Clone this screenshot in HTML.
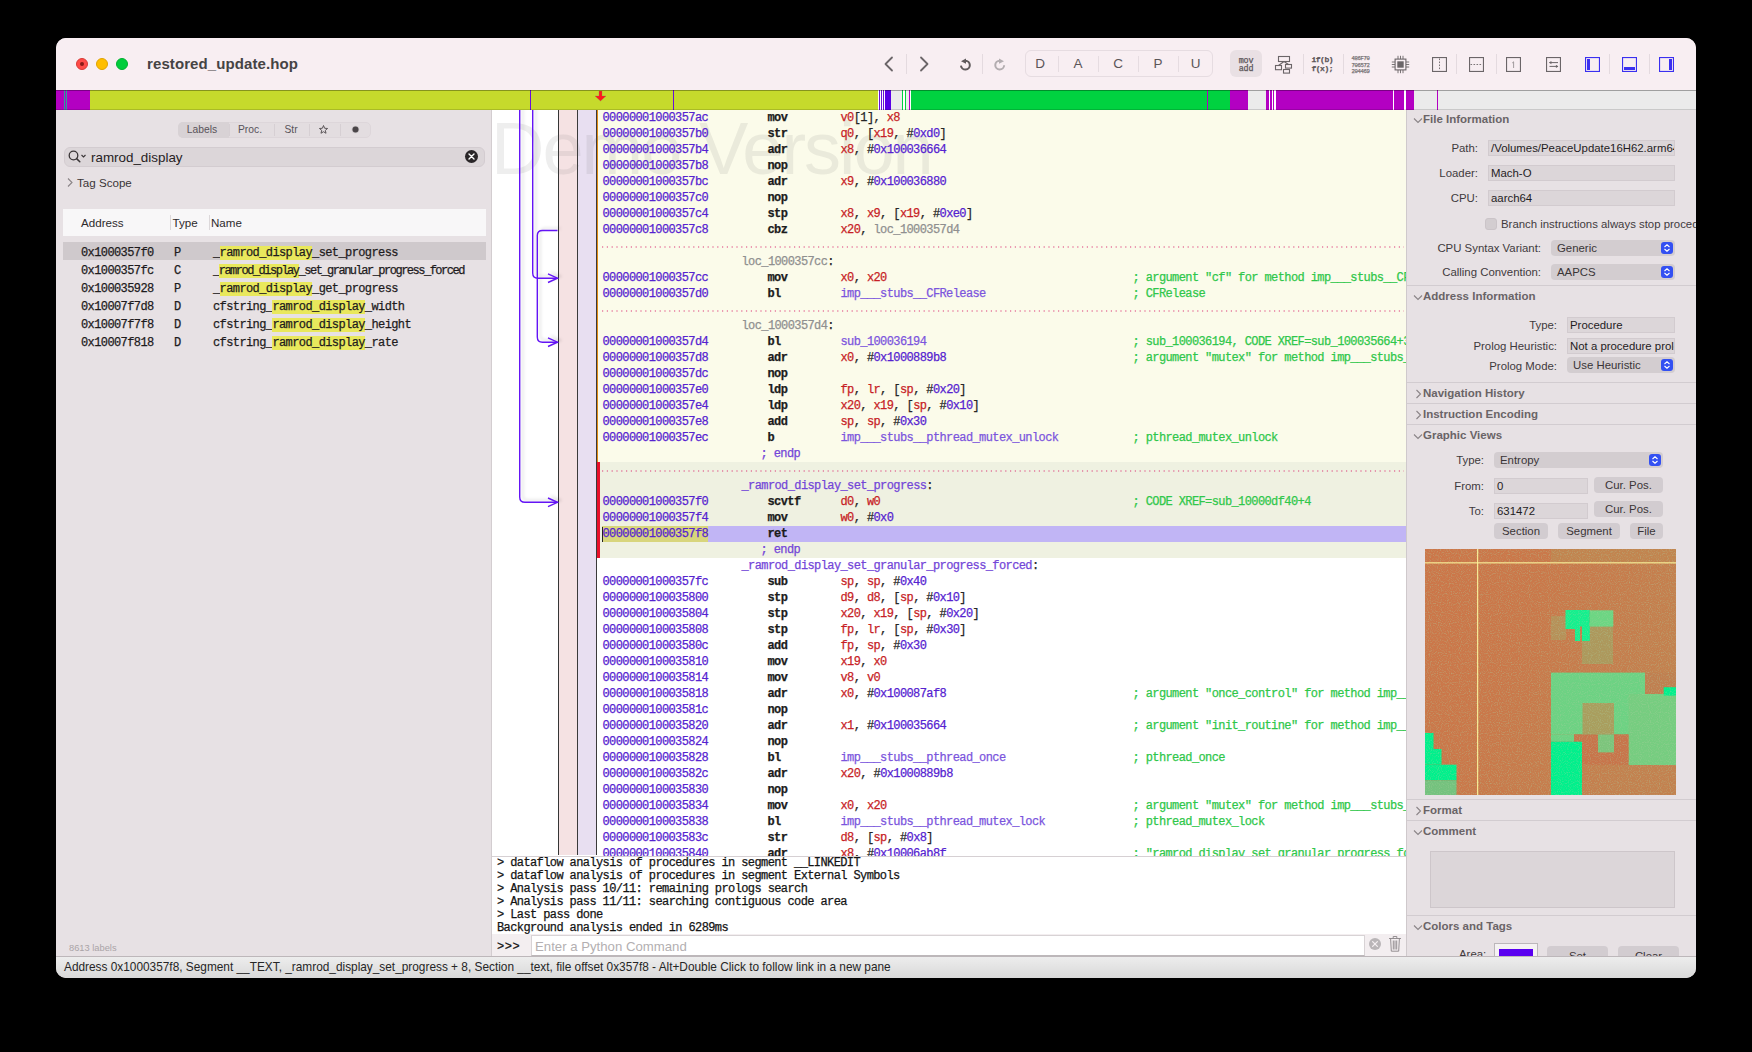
<!DOCTYPE html><html><head><meta charset="utf-8"><style>
*{box-sizing:border-box;margin:0;padding:0}
html,body{width:1752px;height:1052px;overflow:hidden;background:#000}
body{position:relative;font-family:"Liberation Sans",sans-serif}
.a{position:absolute}
.win{position:absolute;left:0;top:0;width:1752px;height:1052px;clip-path:inset(38px 56px 74px 56px round 10px)}
.m{font-family:"Liberation Mono",monospace;font-size:12px;letter-spacing:-0.6px;white-space:pre;-webkit-text-stroke:0.25px currentColor}
.s{font-family:"Liberation Sans",sans-serif;white-space:pre}
.row{position:absolute;left:597px;width:809px;height:16px}
.t{position:absolute;top:0;line-height:16px;height:16px}
.ad{color:#5522d0}
.mn{color:#1c1c1c;font-weight:bold}
.rg{color:#c71e26}
.nm{color:#5522d0}
.pn{color:#262626}
.gl{color:#8f8f8f}
.fn{color:#7b55dd}
.cm{color:#2fc74a}
.lb{color:#8f8f8f}
.pl{color:#7346d8}
.sep{position:absolute;height:1px;border-top:1px dotted #e05a8e}
</style></head><body>
<div class="win">
<div class="a" style="left:56px;top:38px;width:1640px;height:940px;background:#e7e1e4"></div>
<div class="a" style="left:56px;top:38px;width:1640px;height:52px;background:#f8eef2"></div>
<div class="a" style="left:76px;top:58px;width:12px;height:12px;border-radius:6px;background:#ff4b47;border:0.5px solid #d83a36"></div>
<div class="a" style="left:96px;top:58px;width:12px;height:12px;border-radius:6px;background:#ffbe00;border:0.5px solid #e0a300"></div>
<div class="a" style="left:116px;top:58px;width:12px;height:12px;border-radius:6px;background:#00cd3c;border:0.5px solid #00b030"></div>
<div class="a" style="left:80px;top:62px;width:4px;height:4px;border-radius:2px;background:#8a1a16"></div>
<div class="a s" style="left:147px;top:54px;font-size:15px;font-weight:bold;color:#454344;line-height:20px;letter-spacing:0.1px">restored_update.hop</div>
<svg class="a" style="left:882px;top:56px" width="14" height="16" viewBox="0 0 14 16" ><path d="M10 1.5 L3.5 8 L10 14.5" fill="none" stroke="#6b6568" stroke-width="1.8" stroke-linecap="round" stroke-linejoin="round"/></svg>
<div class="a" style="left:906px;top:54px;width:1px;height:20px;background:#e4dadf"></div>
<svg class="a" style="left:917px;top:56px" width="14" height="16" viewBox="0 0 14 16" ><path d="M4 1.5 L10.5 8 L4 14.5" fill="none" stroke="#6b6568" stroke-width="1.8" stroke-linecap="round" stroke-linejoin="round"/></svg>
<svg class="a" style="left:955px;top:55px" width="20" height="20" viewBox="0 0 20 20" ><path d="M10.4 5.65 A4.45 4.45 0 1 1 5.95 10.6" fill="none" stroke="#5f5a5c" stroke-width="2"/><path d="M6 6.2 L11 3.6 L11 8.8 Z" fill="#5f5a5c"/></svg>
<div class="a" style="left:982px;top:54px;width:1px;height:20px;background:#e4dadf"></div>
<svg class="a" style="left:990px;top:55px" width="20" height="20" viewBox="0 0 20 20" ><path d="M9.7 5.65 A4.45 4.45 0 1 0 14.15 10.3" fill="none" stroke="#b3adb0" stroke-width="2"/><path d="M14 6.2 L9 3.6 L9 8.8 Z" fill="#b3adb0"/></svg>
<div class="a" style="left:1025px;top:50px;width:188px;height:27px;border:1px solid #e6dce1;border-radius:6px"></div>
<div class="a s" style="left:1030px;top:55px;width:20px;text-align:center;font-size:13.5px;line-height:18px;color:#5b5558">D</div>
<div class="a s" style="left:1068px;top:55px;width:20px;text-align:center;font-size:13.5px;line-height:18px;color:#5b5558">A</div>
<div class="a s" style="left:1108px;top:55px;width:20px;text-align:center;font-size:13.5px;line-height:18px;color:#5b5558">C</div>
<div class="a s" style="left:1148px;top:55px;width:20px;text-align:center;font-size:13.5px;line-height:18px;color:#5b5558">P</div>
<div class="a s" style="left:1185.5px;top:55px;width:20px;text-align:center;font-size:13.5px;line-height:18px;color:#5b5558">U</div>
<div class="a" style="left:1058px;top:56px;width:1px;height:16px;background:#e6dce1"></div>
<div class="a" style="left:1098px;top:56px;width:1px;height:16px;background:#e6dce1"></div>
<div class="a" style="left:1138px;top:56px;width:1px;height:16px;background:#e6dce1"></div>
<div class="a" style="left:1178px;top:56px;width:1px;height:16px;background:#e6dce1"></div>
<div class="a" style="left:1230px;top:50px;width:32px;height:27px;border-radius:6px;background:#e9e0e4"></div>
<div class="a m" style="left:1230px;top:58.3px;width:32px;text-align:center;font-size:8.4px;letter-spacing:-0.2px;line-height:7.8px;color:#5b5558">mov
add</div>
<svg class="a" style="left:1274px;top:55px" width="19" height="19" viewBox="0 0 19 19" ><g fill="none" stroke="#6b6568" stroke-width="1.1"><rect x="4.5" y="1.5" width="11" height="5"/><rect x="1.5" y="10.5" width="6" height="4.2"/><rect x="11.5" y="9.5" width="6" height="3.6"/><rect x="9.5" y="14.5" width="6" height="3.6"/><path d="M10 6.5 L4.5 10.5 M10 6.5 L14.5 9.5"/></g></svg>
<div class="a" style="left:1303px;top:54px;width:1px;height:20px;background:#e4dadf"></div>
<div class="a m" style="left:1308px;top:56.4px;width:25px;text-align:right;font-size:8px;font-weight:bold;letter-spacing:-0.5px;line-height:8.2px;color:#5b5558">if(b)
f(x);</div>
<div class="a" style="left:1343px;top:54px;width:1px;height:20px;background:#e4dadf"></div>
<div class="a m" style="left:1350px;top:56px;width:21px;text-align:center;font-size:5.6px;letter-spacing:-0.35px;line-height:6.5px;color:#7a7477">486F70
706572
204469</div>
<svg class="a" style="left:1391px;top:55px" width="19" height="19" viewBox="0 0 19 19" ><rect x="4.1" y="4.1" width="10.8" height="10.8" fill="none" stroke="#6b6568" stroke-width="1.1"/><rect x="6.3" y="6.3" width="6.4" height="6.4" fill="#6b6568"/><g stroke="#6b6568" stroke-width="0.9"><path d="M7 0.8V4 M9.5 0.8V4 M12 0.8V4 M7 15V18.2 M9.5 15V18.2 M12 15V18.2 M0.8 7H4 M0.8 9.5H4 M0.8 12H4 M15 7H18.2 M15 9.5H18.2 M15 12H18.2"/></g></svg>
<svg class="a" style="left:1432px;top:57px" width="15" height="15" viewBox="0 0 15 15" ><rect x="0.55" y="0.55" width="13.9" height="13.9" fill="none" stroke="#6b6568" stroke-width="1.1"/><path d="M7.5 1.5V13.5" stroke="#6b6568" stroke-width="0.9" stroke-dasharray="1.6 1.4"/></svg>
<div class="a" style="left:1456px;top:54px;width:1px;height:20px;background:#e4dadf"></div>
<svg class="a" style="left:1469px;top:57px" width="15" height="15" viewBox="0 0 15 15" ><rect x="0.55" y="0.55" width="13.9" height="13.9" fill="none" stroke="#6b6568" stroke-width="1.1"/><path d="M1.5 7.5H13.5" stroke="#6b6568" stroke-width="0.9" stroke-dasharray="1.6 1.4"/></svg>
<div class="a" style="left:1496px;top:54px;width:1px;height:20px;background:#e4dadf"></div>
<svg class="a" style="left:1506px;top:57px" width="15" height="15" viewBox="0 0 15 15" ><rect x="0.55" y="0.55" width="13.9" height="13.9" fill="none" stroke="#6b6568" stroke-width="1.1"/><path d="M6.2 6 L7.6 4.8 V11" fill="none" stroke="#8b8588" stroke-width="0.8"/></svg>
<svg class="a" style="left:1546px;top:57px" width="15" height="15" viewBox="0 0 15 15" ><rect x="0.55" y="0.55" width="13.9" height="13.9" fill="none" stroke="#6b6568" stroke-width="1.1"/><g fill="none" stroke="#6b6568" stroke-width="1"><path d="M3.5 5.6H12 M3.5 9.4H12"/></g><path d="M3 5.6 L5.4 4 V7.2Z M12.3 9.4 L9.9 7.8 V11Z" fill="#6b6568"/></svg>
<svg class="a" style="left:1585px;top:57px" width="15" height="15" viewBox="0 0 15 15" ><rect x="0.55" y="0.55" width="13.9" height="13.9" fill="none" stroke="#3a2ff0" stroke-width="1.1"/><rect x="2" y="2" width="3" height="11" fill="#3a2ff0"/></svg>
<div class="a" style="left:1609px;top:54px;width:1px;height:20px;background:#e4dadf"></div>
<svg class="a" style="left:1622px;top:57px" width="15" height="15" viewBox="0 0 15 15" ><rect x="0.55" y="0.55" width="13.9" height="13.9" fill="none" stroke="#3a2ff0" stroke-width="1.1"/><rect x="2" y="10" width="11" height="3" fill="#3a2ff0"/></svg>
<div class="a" style="left:1649px;top:54px;width:1px;height:20px;background:#e4dadf"></div>
<svg class="a" style="left:1659px;top:57px" width="15" height="15" viewBox="0 0 15 15" ><rect x="0.55" y="0.55" width="13.9" height="13.9" fill="none" stroke="#3a2ff0" stroke-width="1.1"/><rect x="10" y="2" width="3" height="11" fill="#3a2ff0"/></svg>
<div class="a" style="left:56px;top:90px;width:34px;height:20px;background:#b300c2"></div>
<div class="a" style="left:90px;top:90px;width:788px;height:20px;background:#c6da2c"></div>
<div class="a" style="left:878px;top:90px;width:7px;height:20px;background:#ffffff"></div>
<div class="a" style="left:885px;top:90px;width:6px;height:20px;background:#5a00e6"></div>
<div class="a" style="left:891px;top:90px;width:11px;height:20px;background:#ebebeb"></div>
<div class="a" style="left:902px;top:90px;width:4px;height:20px;background:#ffffff"></div>
<div class="a" style="left:906px;top:90px;width:3px;height:20px;background:#ebebeb"></div>
<div class="a" style="left:909px;top:90px;width:2px;height:20px;background:#ffffff"></div>
<div class="a" style="left:911px;top:90px;width:319px;height:20px;background:#00d240"></div>
<div class="a" style="left:1230px;top:90px;width:18px;height:20px;background:#b300c2"></div>
<div class="a" style="left:1248px;top:90px;width:18px;height:20px;background:#ebebeb"></div>
<div class="a" style="left:1266px;top:90px;width:3px;height:20px;background:#b300c2"></div>
<div class="a" style="left:1269px;top:90px;width:1px;height:20px;background:#ffffff"></div>
<div class="a" style="left:1270px;top:90px;width:2px;height:20px;background:#b300c2"></div>
<div class="a" style="left:1272px;top:90px;width:1px;height:20px;background:#ffffff"></div>
<div class="a" style="left:1273px;top:90px;width:1px;height:20px;background:#b300c2"></div>
<div class="a" style="left:1274px;top:90px;width:2px;height:20px;background:#ffffff"></div>
<div class="a" style="left:1276px;top:90px;width:117px;height:20px;background:#b300c2"></div>
<div class="a" style="left:1393px;top:90px;width:1px;height:20px;background:#ffffff"></div>
<div class="a" style="left:1394px;top:90px;width:10px;height:20px;background:#b300c2"></div>
<div class="a" style="left:1404px;top:90px;width:2px;height:20px;background:#ffffff"></div>
<div class="a" style="left:1406px;top:90px;width:8px;height:20px;background:#b300c2"></div>
<div class="a" style="left:1414px;top:90px;width:282px;height:20px;background:#ebebeb"></div>
<div class="a" style="left:64px;top:90px;width:1px;height:20px;background:#2aa0a0"></div>
<div class="a" style="left:66px;top:90px;width:1px;height:20px;background:#2aa0a0"></div>
<div class="a" style="left:530px;top:90px;width:1px;height:20px;background:#6a10d8"></div>
<div class="a" style="left:673px;top:90px;width:1px;height:20px;background:#6a10d8"></div>
<div class="a" style="left:879px;top:90px;width:1px;height:20px;background:#6a10d8"></div>
<div class="a" style="left:881px;top:90px;width:1px;height:20px;background:#6a10d8"></div>
<div class="a" style="left:883px;top:90px;width:1px;height:20px;background:#6a10d8"></div>
<div class="a" style="left:902px;top:90px;width:1px;height:20px;background:#00d240"></div>
<div class="a" style="left:905px;top:90px;width:1px;height:20px;background:#00d240"></div>
<div class="a" style="left:909px;top:90px;width:1px;height:20px;background:#b300c2"></div>
<div class="a" style="left:1207px;top:90px;width:1px;height:20px;background:#b300c2"></div>
<div class="a" style="left:1437px;top:90px;width:1px;height:20px;background:#b300c2"></div>
<div class="a" style="left:56px;top:90px;width:1640px;height:1px;background:rgba(0,0,0,0.32)"></div>
<div class="a" style="left:56px;top:109px;width:1640px;height:1px;background:rgba(0,0,0,0.14)"></div>
<svg class="a" style="left:594px;top:91px" width="13" height="11" viewBox="0 0 13 11" ><path d="M5 0H8V5H12L6.5 10L1 5H5Z" fill="#ff1a1a" stroke="rgba(120,120,120,0.5)" stroke-width="0.5"/></svg>
<div class="a" style="left:56px;top:110px;width:435px;height:846px;background:#e7e1e4"></div>
<div class="a" style="left:491px;top:110px;width:1px;height:745px;background:#d3cdd0"></div>
<div class="a" style="left:178px;top:122px;width:193px;height:16px;border-radius:5px;background:#e3dde0;border:0.5px solid #ddd6da"></div>
<div class="a" style="left:178px;top:122px;width:50.5px;height:16px;border-radius:5px 0 0 5px;background:#d8d2d5"></div>
<div class="a" style="left:228.5px;top:124px;width:1px;height:12px;background:#d6cfd3"></div>
<div class="a" style="left:273.5px;top:124px;width:1px;height:12px;background:#d6cfd3"></div>
<div class="a" style="left:308.5px;top:124px;width:1px;height:12px;background:#d6cfd3"></div>
<div class="a" style="left:340px;top:124px;width:1px;height:12px;background:#d6cfd3"></div>
<div class="a s" style="left:172px;top:123px;width:60px;text-align:center;font-size:10.3px;line-height:14px;color:#58535a">Labels</div>
<div class="a s" style="left:220px;top:123px;width:60px;text-align:center;font-size:10.3px;line-height:14px;color:#58535a">Proc.</div>
<div class="a s" style="left:261px;top:123px;width:60px;text-align:center;font-size:10.3px;line-height:14px;color:#58535a">Str</div>
<svg class="a" style="left:317px;top:123px" width="13" height="13" viewBox="0 0 13 13" ><path d="M6.50 2.50 L7.62 5.26 L10.59 5.47 L8.31 7.39 L9.03 10.28 L6.50 8.70 L3.97 10.28 L4.69 7.39 L2.41 5.47 L5.38 5.26Z" fill="none" stroke="#5b5558" stroke-width="1"/></svg>
<svg class="a" style="left:349px;top:123px" width="13" height="13" viewBox="0 0 13 13" ><circle cx="6.5" cy="6.5" r="3.8" fill="#c9c3c6"/><circle cx="6.5" cy="6.5" r="3" fill="#4a4548"/></svg>
<div class="a" style="left:64px;top:147px;width:421px;height:20px;border-radius:6px;background:#dcd6d9;border:0.5px solid #d3ccd0"></div>
<svg class="a" style="left:68px;top:150px" width="19" height="14" viewBox="0 0 19 14" ><circle cx="5.5" cy="5.5" r="4.3" fill="none" stroke="#3a3537" stroke-width="1.3"/><path d="M8.6 8.6 L11.8 11.8" stroke="#3a3537" stroke-width="1.5" stroke-linecap="round"/><path d="M13.5 5 L15.5 7 L17.5 5" fill="none" stroke="#3a3537" stroke-width="1.1"/></svg>
<div class="a s" style="left:91px;top:149px;font-size:13.4px;line-height:18px;color:#262224">ramrod_display</div>
<svg class="a" style="left:464px;top:149px" width="15" height="15" viewBox="0 0 15 15" ><circle cx="7.5" cy="7.5" r="6.5" fill="#2a2628"/><path d="M5 5L10 10M10 5L5 10" stroke="#fff" stroke-width="1.4" stroke-linecap="round"/></svg>
<svg class="a" style="left:66px;top:177px" width="8" height="11" viewBox="0 0 8 11" ><path d="M2 1.5 L6 5.5 L2 9.5" fill="none" stroke="#8a8487" stroke-width="1.1"/></svg>
<div class="a s" style="left:77px;top:176px;font-size:11.6px;line-height:14px;color:#3a3537">Tag Scope</div>
<div class="a" style="left:63px;top:209px;width:423px;height:27px;background:#f8f7f8"></div>
<div class="a" style="left:170px;top:215px;width:1px;height:15px;background:#dcd8da"></div>
<div class="a" style="left:209px;top:215px;width:1px;height:15px;background:#dcd8da"></div>
<div class="a s" style="left:81px;top:216px;font-size:11.6px;line-height:14px;color:#2e2a2c">Address</div>
<div class="a s" style="left:172.5px;top:216px;font-size:11.6px;line-height:14px;color:#2e2a2c">Type</div>
<div class="a s" style="left:211px;top:216px;font-size:11.6px;line-height:14px;color:#2e2a2c">Name</div>
<div class="a" style="left:63px;top:242px;width:423px;height:18px;background:#cfc9cc"></div>
<div class="a m" style="left:81px;top:245px;line-height:16px;color:#1e1b1d">0x1000357f0</div>
<div class="a m" style="left:174px;top:245px;line-height:16px;color:#1e1b1d">P</div>
<div class="a m" style="left:213px;top:245px;line-height:16px;color:#1e1b1d">_<span style="background:#e9e85c">ramrod_display</span>_set_progress</div>
<div class="a m" style="left:81px;top:263px;line-height:16px;color:#1e1b1d">0x1000357fc</div>
<div class="a m" style="left:174px;top:263px;line-height:16px;color:#1e1b1d">C</div>
<div class="a m" style="left:213px;top:263px;line-height:16px;color:#1e1b1d;letter-spacing:-1.5px">_<span style="background:#e9e85c">ramrod_display</span>_set_granular_progress_forced</div>
<div class="a m" style="left:81px;top:281px;line-height:16px;color:#1e1b1d">0x100035928</div>
<div class="a m" style="left:174px;top:281px;line-height:16px;color:#1e1b1d">P</div>
<div class="a m" style="left:213px;top:281px;line-height:16px;color:#1e1b1d">_<span style="background:#e9e85c">ramrod_display</span>_get_progress</div>
<div class="a m" style="left:81px;top:299px;line-height:16px;color:#1e1b1d">0x10007f7d8</div>
<div class="a m" style="left:174px;top:299px;line-height:16px;color:#1e1b1d">D</div>
<div class="a m" style="left:213px;top:299px;line-height:16px;color:#1e1b1d">cfstring_<span style="background:#e9e85c">ramrod_display</span>_width</div>
<div class="a m" style="left:81px;top:317px;line-height:16px;color:#1e1b1d">0x10007f7f8</div>
<div class="a m" style="left:174px;top:317px;line-height:16px;color:#1e1b1d">D</div>
<div class="a m" style="left:213px;top:317px;line-height:16px;color:#1e1b1d">cfstring_<span style="background:#e9e85c">ramrod_display</span>_height</div>
<div class="a m" style="left:81px;top:335px;line-height:16px;color:#1e1b1d">0x10007f818</div>
<div class="a m" style="left:174px;top:335px;line-height:16px;color:#1e1b1d">D</div>
<div class="a m" style="left:213px;top:335px;line-height:16px;color:#1e1b1d">cfstring_<span style="background:#e9e85c">ramrod_display</span>_rate</div>
<div class="a s" style="left:69px;top:943px;font-size:9.3px;line-height:11px;color:#aaa4a7">8613 labels</div>
<div class="a" style="left:492px;top:110px;width:914px;height:746px;background:#ffffff;overflow:hidden">
<div class="a" style="left:105px;top:0px;width:809px;height:352px;background:#fbfbea"></div>
<div class="a" style="left:105px;top:352px;width:809px;height:96px;background:#eff1e1"></div>
<div class="a" style="left:111px;top:416px;width:806px;height:16px;background:#c1b5f5"></div>
<div class="a" style="left:110px;top:416px;width:106px;height:16px;background:#d8d57c"></div>
<div class="a" style="left:67px;top:0px;width:18px;height:745px;background:#f5e2e3"></div>
<div class="a" style="left:86px;top:0px;width:18px;height:745px;background:#e8dff1"></div>
<div class="a" style="left:66px;top:0px;width:1.4px;height:745px;background:#353535"></div>
<div class="a" style="left:85px;top:0px;width:1px;height:745px;background:#3a3a3a"></div>
<div class="a" style="left:104px;top:0px;width:1px;height:745px;background:#3a3a3a"></div>
<div class="a" style="left:105px;top:0px;width:1px;height:352px;background:#e08a10"></div>
<div class="a" style="left:105px;top:352px;width:3px;height:96px;background:#e8102a"></div>
<div class="a s" style="left:-1px;top:-3px;font-size:74px;line-height:84px;color:rgba(90,90,90,0.105);letter-spacing:-2px">Demo Version</div>
<svg class="a" style="left:0;top:0;filter:drop-shadow(3px -2px 1.5px rgba(0,0,0,0.13))" width="70" height="745" viewBox="492 110 70 745"><g fill="none" stroke="#6414f5" stroke-width="1.4"><path d="M519.7 100 V497 Q519.7 502.3 525 502.3 H557.5"/><path d="M532.7 100 V273 Q532.7 278.2 538 278.2 H557.5"/><path d="M557.5 230.5 H542.5 Q537.3 230.5 537.3 235.5 V337 Q537.3 342.2 542.5 342.2 H557.5"/><path d="M548 273.9 L557.5 278.2 L548 282.5"/><path d="M548 337.9 L557.5 342.2 L548 346.5"/><path d="M548 498 L557.5 502.3 L548 506.6"/></g></svg>
<svg class="a" style="left:109px;top:136px" width="805" height="2"><line x1="1" y1="1" x2="803" y2="1" stroke="#dc3a78" stroke-width="1.15" stroke-dasharray="1.2 3.6"/></svg>
<svg class="a" style="left:109px;top:200px" width="805" height="2"><line x1="1" y1="1" x2="803" y2="1" stroke="#dc3a78" stroke-width="1.15" stroke-dasharray="1.2 3.6"/></svg>
<svg class="a" style="left:109px;top:360px" width="805" height="2"><line x1="1" y1="1" x2="803" y2="1" stroke="#dc3a78" stroke-width="1.15" stroke-dasharray="1.2 3.6"/></svg>
<div class="t m ad" style="left:110.5px;top:0px">00000001000357ac</div>
<div class="t m mn" style="left:275.5px;top:0px">mov</div>
<div class="t m " style="left:348.5px;top:0px"><span class="rg">v0</span><span class="pn">[1]</span><span class="pn">, </span><span class="rg">x8</span></div>
<div class="t m ad" style="left:110.5px;top:16px">00000001000357b0</div>
<div class="t m mn" style="left:275.5px;top:16px">str</div>
<div class="t m " style="left:348.5px;top:16px"><span class="rg">q0</span><span class="pn">, [</span><span class="rg">x19</span><span class="pn">, </span><span class="pn">#</span><span class="nm">0xd0</span><span class="pn">]</span></div>
<div class="t m ad" style="left:110.5px;top:32px">00000001000357b4</div>
<div class="t m mn" style="left:275.5px;top:32px">adr</div>
<div class="t m " style="left:348.5px;top:32px"><span class="rg">x8</span><span class="pn">, </span><span class="pn">#</span><span class="nm">0x100036664</span></div>
<div class="t m ad" style="left:110.5px;top:48px">00000001000357b8</div>
<div class="t m mn" style="left:275.5px;top:48px">nop</div>
<div class="t m ad" style="left:110.5px;top:64px">00000001000357bc</div>
<div class="t m mn" style="left:275.5px;top:64px">adr</div>
<div class="t m " style="left:348.5px;top:64px"><span class="rg">x9</span><span class="pn">, </span><span class="pn">#</span><span class="nm">0x100036880</span></div>
<div class="t m ad" style="left:110.5px;top:80px">00000001000357c0</div>
<div class="t m mn" style="left:275.5px;top:80px">nop</div>
<div class="t m ad" style="left:110.5px;top:96px">00000001000357c4</div>
<div class="t m mn" style="left:275.5px;top:96px">stp</div>
<div class="t m " style="left:348.5px;top:96px"><span class="rg">x8</span><span class="pn">, </span><span class="rg">x9</span><span class="pn">, [</span><span class="rg">x19</span><span class="pn">, </span><span class="pn">#</span><span class="nm">0xe0</span><span class="pn">]</span></div>
<div class="t m ad" style="left:110.5px;top:112px">00000001000357c8</div>
<div class="t m mn" style="left:275.5px;top:112px">cbz</div>
<div class="t m " style="left:348.5px;top:112px"><span class="rg">x20</span><span class="pn">, </span><span class="gl">loc_1000357d4</span></div>
<div class="t m ad" style="left:110.5px;top:160px">00000001000357cc</div>
<div class="t m mn" style="left:275.5px;top:160px">mov</div>
<div class="t m " style="left:348.5px;top:160px"><span class="rg">x0</span><span class="pn">, </span><span class="rg">x20</span></div>
<div class="t m cm" style="left:640.5px;top:160px">; argument "cf" for method imp___stubs__CFRelease</div>
<div class="t m ad" style="left:110.5px;top:176px">00000001000357d0</div>
<div class="t m mn" style="left:275.5px;top:176px">bl</div>
<div class="t m " style="left:348.5px;top:176px"><span class="fn">imp___stubs__CFRelease</span></div>
<div class="t m cm" style="left:640.5px;top:176px">; CFRelease</div>
<div class="t m ad" style="left:110.5px;top:224px">00000001000357d4</div>
<div class="t m mn" style="left:275.5px;top:224px">bl</div>
<div class="t m " style="left:348.5px;top:224px"><span class="fn">sub_100036194</span></div>
<div class="t m cm" style="left:640.5px;top:224px">; sub_100036194, CODE XREF=sub_100035664+3c</div>
<div class="t m ad" style="left:110.5px;top:240px">00000001000357d8</div>
<div class="t m mn" style="left:275.5px;top:240px">adr</div>
<div class="t m " style="left:348.5px;top:240px"><span class="rg">x0</span><span class="pn">, </span><span class="pn">#</span><span class="nm">0x1000889b8</span></div>
<div class="t m cm" style="left:640.5px;top:240px">; argument "mutex" for method imp___stubs__pthread_mutex_unlock</div>
<div class="t m ad" style="left:110.5px;top:256px">00000001000357dc</div>
<div class="t m mn" style="left:275.5px;top:256px">nop</div>
<div class="t m ad" style="left:110.5px;top:272px">00000001000357e0</div>
<div class="t m mn" style="left:275.5px;top:272px">ldp</div>
<div class="t m " style="left:348.5px;top:272px"><span class="rg">fp</span><span class="pn">, </span><span class="rg">lr</span><span class="pn">, [</span><span class="rg">sp</span><span class="pn">, </span><span class="pn">#</span><span class="nm">0x20</span><span class="pn">]</span></div>
<div class="t m ad" style="left:110.5px;top:288px">00000001000357e4</div>
<div class="t m mn" style="left:275.5px;top:288px">ldp</div>
<div class="t m " style="left:348.5px;top:288px"><span class="rg">x20</span><span class="pn">, </span><span class="rg">x19</span><span class="pn">, [</span><span class="rg">sp</span><span class="pn">, </span><span class="pn">#</span><span class="nm">0x10</span><span class="pn">]</span></div>
<div class="t m ad" style="left:110.5px;top:304px">00000001000357e8</div>
<div class="t m mn" style="left:275.5px;top:304px">add</div>
<div class="t m " style="left:348.5px;top:304px"><span class="rg">sp</span><span class="pn">, </span><span class="rg">sp</span><span class="pn">, </span><span class="pn">#</span><span class="nm">0x30</span></div>
<div class="t m ad" style="left:110.5px;top:320px">00000001000357ec</div>
<div class="t m mn" style="left:275.5px;top:320px">b</div>
<div class="t m " style="left:348.5px;top:320px"><span class="fn">imp___stubs__pthread_mutex_unlock</span></div>
<div class="t m cm" style="left:640.5px;top:320px">; pthread_mutex_unlock</div>
<div class="t m ad" style="left:110.5px;top:384px">00000001000357f0</div>
<div class="t m mn" style="left:275.5px;top:384px">scvtf</div>
<div class="t m " style="left:348.5px;top:384px"><span class="rg">d0</span><span class="pn">, </span><span class="rg">w0</span></div>
<div class="t m cm" style="left:640.5px;top:384px">; CODE XREF=sub_10000df40+4</div>
<div class="t m ad" style="left:110.5px;top:400px">00000001000357f4</div>
<div class="t m mn" style="left:275.5px;top:400px">mov</div>
<div class="t m " style="left:348.5px;top:400px"><span class="rg">w0</span><span class="pn">, </span><span class="pn">#</span><span class="nm">0x0</span></div>
<div class="t m ad" style="left:110.5px;top:416px">00000001000357f8</div>
<div class="t m mn" style="left:275.5px;top:416px">ret</div>
<div class="t m ad" style="left:110.5px;top:464px">00000001000357fc</div>
<div class="t m mn" style="left:275.5px;top:464px">sub</div>
<div class="t m " style="left:348.5px;top:464px"><span class="rg">sp</span><span class="pn">, </span><span class="rg">sp</span><span class="pn">, </span><span class="pn">#</span><span class="nm">0x40</span></div>
<div class="t m ad" style="left:110.5px;top:480px">0000000100035800</div>
<div class="t m mn" style="left:275.5px;top:480px">stp</div>
<div class="t m " style="left:348.5px;top:480px"><span class="rg">d9</span><span class="pn">, </span><span class="rg">d8</span><span class="pn">, [</span><span class="rg">sp</span><span class="pn">, </span><span class="pn">#</span><span class="nm">0x10</span><span class="pn">]</span></div>
<div class="t m ad" style="left:110.5px;top:496px">0000000100035804</div>
<div class="t m mn" style="left:275.5px;top:496px">stp</div>
<div class="t m " style="left:348.5px;top:496px"><span class="rg">x20</span><span class="pn">, </span><span class="rg">x19</span><span class="pn">, [</span><span class="rg">sp</span><span class="pn">, </span><span class="pn">#</span><span class="nm">0x20</span><span class="pn">]</span></div>
<div class="t m ad" style="left:110.5px;top:512px">0000000100035808</div>
<div class="t m mn" style="left:275.5px;top:512px">stp</div>
<div class="t m " style="left:348.5px;top:512px"><span class="rg">fp</span><span class="pn">, </span><span class="rg">lr</span><span class="pn">, [</span><span class="rg">sp</span><span class="pn">, </span><span class="pn">#</span><span class="nm">0x30</span><span class="pn">]</span></div>
<div class="t m ad" style="left:110.5px;top:528px">000000010003580c</div>
<div class="t m mn" style="left:275.5px;top:528px">add</div>
<div class="t m " style="left:348.5px;top:528px"><span class="rg">fp</span><span class="pn">, </span><span class="rg">sp</span><span class="pn">, </span><span class="pn">#</span><span class="nm">0x30</span></div>
<div class="t m ad" style="left:110.5px;top:544px">0000000100035810</div>
<div class="t m mn" style="left:275.5px;top:544px">mov</div>
<div class="t m " style="left:348.5px;top:544px"><span class="rg">x19</span><span class="pn">, </span><span class="rg">x0</span></div>
<div class="t m ad" style="left:110.5px;top:560px">0000000100035814</div>
<div class="t m mn" style="left:275.5px;top:560px">mov</div>
<div class="t m " style="left:348.5px;top:560px"><span class="rg">v8</span><span class="pn">, </span><span class="rg">v0</span></div>
<div class="t m ad" style="left:110.5px;top:576px">0000000100035818</div>
<div class="t m mn" style="left:275.5px;top:576px">adr</div>
<div class="t m " style="left:348.5px;top:576px"><span class="rg">x0</span><span class="pn">, </span><span class="pn">#</span><span class="nm">0x100087af8</span></div>
<div class="t m cm" style="left:640.5px;top:576px">; argument "once_control" for method imp___stubs__pthread_once</div>
<div class="t m ad" style="left:110.5px;top:592px">000000010003581c</div>
<div class="t m mn" style="left:275.5px;top:592px">nop</div>
<div class="t m ad" style="left:110.5px;top:608px">0000000100035820</div>
<div class="t m mn" style="left:275.5px;top:608px">adr</div>
<div class="t m " style="left:348.5px;top:608px"><span class="rg">x1</span><span class="pn">, </span><span class="pn">#</span><span class="nm">0x100035664</span></div>
<div class="t m cm" style="left:640.5px;top:608px">; argument "init_routine" for method imp___stubs__pthread_once</div>
<div class="t m ad" style="left:110.5px;top:624px">0000000100035824</div>
<div class="t m mn" style="left:275.5px;top:624px">nop</div>
<div class="t m ad" style="left:110.5px;top:640px">0000000100035828</div>
<div class="t m mn" style="left:275.5px;top:640px">bl</div>
<div class="t m " style="left:348.5px;top:640px"><span class="fn">imp___stubs__pthread_once</span></div>
<div class="t m cm" style="left:640.5px;top:640px">; pthread_once</div>
<div class="t m ad" style="left:110.5px;top:656px">000000010003582c</div>
<div class="t m mn" style="left:275.5px;top:656px">adr</div>
<div class="t m " style="left:348.5px;top:656px"><span class="rg">x20</span><span class="pn">, </span><span class="pn">#</span><span class="nm">0x1000889b8</span></div>
<div class="t m ad" style="left:110.5px;top:672px">0000000100035830</div>
<div class="t m mn" style="left:275.5px;top:672px">nop</div>
<div class="t m ad" style="left:110.5px;top:688px">0000000100035834</div>
<div class="t m mn" style="left:275.5px;top:688px">mov</div>
<div class="t m " style="left:348.5px;top:688px"><span class="rg">x0</span><span class="pn">, </span><span class="rg">x20</span></div>
<div class="t m cm" style="left:640.5px;top:688px">; argument "mutex" for method imp___stubs__pthread_mutex_lock</div>
<div class="t m ad" style="left:110.5px;top:704px">0000000100035838</div>
<div class="t m mn" style="left:275.5px;top:704px">bl</div>
<div class="t m " style="left:348.5px;top:704px"><span class="fn">imp___stubs__pthread_mutex_lock</span></div>
<div class="t m cm" style="left:640.5px;top:704px">; pthread_mutex_lock</div>
<div class="t m ad" style="left:110.5px;top:720px">000000010003583c</div>
<div class="t m mn" style="left:275.5px;top:720px">str</div>
<div class="t m " style="left:348.5px;top:720px"><span class="rg">d8</span><span class="pn">, [</span><span class="rg">sp</span><span class="pn">, </span><span class="pn">#</span><span class="nm">0x8</span><span class="pn">]</span></div>
<div class="t m ad" style="left:110.5px;top:736px">0000000100035840</div>
<div class="t m mn" style="left:275.5px;top:736px">adr</div>
<div class="t m " style="left:348.5px;top:736px"><span class="rg">x8</span><span class="pn">, </span><span class="pn">#</span><span class="nm">0x10006ab8f</span></div>
<div class="t m cm" style="left:640.5px;top:736px">; "ramrod_display_set_granular_progress_forced"</div>
<div class="t m " style="left:249.5px;top:144px"><span class="lb">loc_1000357cc</span><span class="pn">:</span></div>
<div class="t m " style="left:249.5px;top:208px"><span class="lb">loc_1000357d4</span><span class="pn">:</span></div>
<div class="t m pl" style="left:268.5px;top:336px">; endp</div>
<div class="t m pl" style="left:268.5px;top:432px">; endp</div>
<div class="t m " style="left:249.5px;top:368px"><span class="pl">_ramrod_display_set_progress</span><span class="pn">:</span></div>
<div class="t m " style="left:249.5px;top:448px"><span class="pl">_ramrod_display_set_granular_progress_forced</span><span class="pn">:</span></div>
<div class="a" style="left:110px;top:417px;width:1px;height:15px;background:#222"></div>
</div>
<div class="a" style="left:492px;top:856px;width:914px;height:100px;background:#ffffff"></div>
<div class="a" style="left:491px;top:856px;width:915px;height:1px;background:#d6d0d3"></div>
<div class="a" style="left:491px;top:855px;width:1px;height:101px;background:#d3cdd0"></div>
<div class="a m" style="left:497px;top:857px;line-height:13px;color:#141414">&gt; dataflow analysis of procedures in segment __LINKEDIT</div>
<div class="a m" style="left:497px;top:870px;line-height:13px;color:#141414">&gt; dataflow analysis of procedures in segment External Symbols</div>
<div class="a m" style="left:497px;top:883px;line-height:13px;color:#141414">&gt; Analysis pass 10/11: remaining prologs search</div>
<div class="a m" style="left:497px;top:896px;line-height:13px;color:#141414">&gt; Analysis pass 11/11: searching contiguous code area</div>
<div class="a m" style="left:497px;top:909px;line-height:13px;color:#141414">&gt; Last pass done</div>
<div class="a m" style="left:497px;top:922px;line-height:13px;color:#141414">Background analysis ended in 6289ms</div>
<div class="a" style="left:492px;top:934px;width:914px;height:22px;background:#f3eef0"></div>
<div class="a m" style="left:497px;top:939px;line-height:16px;letter-spacing:0.5px;color:#141414">&gt;&gt;&gt;</div>
<div class="a" style="left:531px;top:935px;width:834px;height:21px;background:#fff;border:1px solid #d8d3d5;border-bottom:1px solid #bdb8ba"></div>
<div class="a s" style="left:535px;top:938.5px;font-size:13.2px;line-height:16px;color:#b3afb1">Enter a Python Command</div>
<svg class="a" style="left:1368px;top:937px" width="14" height="14" viewBox="0 0 14 14" ><circle cx="7" cy="7" r="6" fill="#b9b5b7"/><path d="M4.6 4.6L9.4 9.4M9.4 4.6L4.6 9.4" stroke="#f3eef0" stroke-width="1.3" stroke-linecap="round"/></svg>
<svg class="a" style="left:1388px;top:935px" width="14" height="18" viewBox="0 0 14 18" ><g fill="none" stroke="#8a8588" stroke-width="0.9"><path d="M1 3.5H13 M5.2 3.5V1.5H8.8V3.5 M2.6 3.5L3.3 16.2H10.7L11.4 3.5 M5.3 5.5V14.5 M7 5.5V14.5 M8.7 5.5V14.5"/></g></svg>
<div class="a" style="left:1406px;top:110px;width:290px;height:846px;background:#e7e1e4"></div>
<div class="a" style="left:1406px;top:110px;width:1px;height:846px;background:#cfc9cc"></div>
<svg class="a" style="left:1413px;top:116.5px" width="10" height="8" viewBox="0 0 10 8" ><path d="M1 1.5 L5 5.5 L9 1.5" fill="none" stroke="#8a8487" stroke-width="1.1"/></svg>
<div class="a s" style="left:1423px;top:112px;font-size:11.5px;font-weight:bold;line-height:14px;color:#6a6467">File Information</div>
<div class="a s" style="left:1278px;top:141px;width:200px;text-align:right;font-size:11.4px;line-height:14px;color:#3f3a3d">Path:</div>
<div class="a s" style="left:1488px;top:140px;width:187px;height:16px;background:#dcd6d9;border:0.5px solid #d2cbcf;overflow:hidden;font-size:11.4px;line-height:14px;padding-left:2px;color:#1f1c1e">/Volumes/PeaceUpdate16H62.arm64UpdateRamDisk</div>
<div class="a s" style="left:1278px;top:166px;width:200px;text-align:right;font-size:11.4px;line-height:14px;color:#3f3a3d">Loader:</div>
<div class="a s" style="left:1488px;top:165px;width:187px;height:16px;background:#dcd6d9;border:0.5px solid #d2cbcf;overflow:hidden;font-size:11.4px;line-height:14px;padding-left:2px;color:#1f1c1e">Mach-O</div>
<div class="a s" style="left:1278px;top:191px;width:200px;text-align:right;font-size:11.4px;line-height:14px;color:#3f3a3d">CPU:</div>
<div class="a s" style="left:1488px;top:190px;width:187px;height:16px;background:#dcd6d9;border:0.5px solid #d2cbcf;overflow:hidden;font-size:11.4px;line-height:14px;padding-left:2px;color:#1f1c1e">aarch64</div>
<div class="a" style="left:1485px;top:218px;width:12px;height:12px;border-radius:3px;background:#d3cdd0;border:0.5px solid #cbc4c8"></div>
<div class="a s" style="left:1501px;top:217px;font-size:11.4px;line-height:14px;color:#3f3a3d">Branch instructions always stop procedure analysis</div>
<div class="a s" style="left:1341px;top:241px;width:200px;text-align:right;font-size:11.4px;line-height:14px;color:#3f3a3d">CPU Syntax Variant:</div>
<div class="a s" style="left:1551px;top:240px;width:124px;height:16px;background:#d3cdd0;border-radius:4px;font-size:11.4px;line-height:16px;padding-left:6px;color:#3a3537">Generic</div>
<div class="a" style="left:1661px;top:242px;width:12px;height:12px;border-radius:3px;background:#3350f2"></div>
<svg class="a" style="left:1661px;top:242px" width="12" height="12" viewBox="0 0 12 12" ><path d="M3.5 5 L6 2.8 L8.5 5 M3.5 7 L6 9.2 L8.5 7" fill="none" stroke="#fff" stroke-width="1.1"/></svg>
<div class="a s" style="left:1341px;top:265px;width:200px;text-align:right;font-size:11.4px;line-height:14px;color:#3f3a3d">Calling Convention:</div>
<div class="a s" style="left:1551px;top:264px;width:124px;height:16px;background:#d3cdd0;border-radius:4px;font-size:11.4px;line-height:16px;padding-left:6px;color:#3a3537">AAPCS</div>
<div class="a" style="left:1661px;top:266px;width:12px;height:12px;border-radius:3px;background:#3350f2"></div>
<svg class="a" style="left:1661px;top:266px" width="12" height="12" viewBox="0 0 12 12" ><path d="M3.5 5 L6 2.8 L8.5 5 M3.5 7 L6 9.2 L8.5 7" fill="none" stroke="#fff" stroke-width="1.1"/></svg>
<div class="a" style="left:1407px;top:285px;width:289px;height:1px;background:#d2ccd0"></div>
<svg class="a" style="left:1413px;top:293.5px" width="10" height="8" viewBox="0 0 10 8" ><path d="M1 1.5 L5 5.5 L9 1.5" fill="none" stroke="#8a8487" stroke-width="1.1"/></svg>
<div class="a s" style="left:1423px;top:289px;font-size:11.5px;font-weight:bold;line-height:14px;color:#6a6467">Address Information</div>
<div class="a s" style="left:1357px;top:318px;width:200px;text-align:right;font-size:11.4px;line-height:14px;color:#3f3a3d">Type:</div>
<div class="a s" style="left:1567px;top:317px;width:108px;height:16px;background:#dcd6d9;border:0.5px solid #d2cbcf;overflow:hidden;font-size:11.4px;line-height:14px;padding-left:2px;color:#1f1c1e">Procedure</div>
<div class="a s" style="left:1357px;top:339px;width:200px;text-align:right;font-size:11.4px;line-height:14px;color:#3f3a3d">Prolog Heuristic:</div>
<div class="a s" style="left:1567px;top:338px;width:108px;height:16px;background:#dcd6d9;border:0.5px solid #d2cbcf;overflow:hidden;font-size:11.4px;line-height:14px;padding-left:2px;color:#1f1c1e">Not a procedure prolog</div>
<div class="a s" style="left:1357px;top:359px;width:200px;text-align:right;font-size:11.4px;line-height:14px;color:#3f3a3d">Prolog Mode:</div>
<div class="a s" style="left:1567px;top:357px;width:108px;height:16px;background:#d3cdd0;border-radius:4px;font-size:11.4px;line-height:16px;padding-left:6px;color:#3a3537">Use Heuristic</div>
<div class="a" style="left:1661px;top:359px;width:12px;height:12px;border-radius:3px;background:#3350f2"></div>
<svg class="a" style="left:1661px;top:359px" width="12" height="12" viewBox="0 0 12 12" ><path d="M3.5 5 L6 2.8 L8.5 5 M3.5 7 L6 9.2 L8.5 7" fill="none" stroke="#fff" stroke-width="1.1"/></svg>
<div class="a" style="left:1407px;top:382px;width:289px;height:1px;background:#d2ccd0"></div>
<svg class="a" style="left:1415px;top:388.5px" width="8" height="11" viewBox="0 0 8 11" ><path d="M1.5 1 L5.5 5 L1.5 9" fill="none" stroke="#8a8487" stroke-width="1.1"/></svg>
<div class="a s" style="left:1423px;top:386px;font-size:11.5px;font-weight:bold;line-height:14px;color:#6a6467">Navigation History</div>
<div class="a" style="left:1407px;top:403px;width:289px;height:1px;background:#d2ccd0"></div>
<svg class="a" style="left:1415px;top:409.5px" width="8" height="11" viewBox="0 0 8 11" ><path d="M1.5 1 L5.5 5 L1.5 9" fill="none" stroke="#8a8487" stroke-width="1.1"/></svg>
<div class="a s" style="left:1423px;top:407px;font-size:11.5px;font-weight:bold;line-height:14px;color:#6a6467">Instruction Encoding</div>
<div class="a" style="left:1407px;top:424px;width:289px;height:1px;background:#d2ccd0"></div>
<svg class="a" style="left:1413px;top:432.5px" width="10" height="8" viewBox="0 0 10 8" ><path d="M1 1.5 L5 5.5 L9 1.5" fill="none" stroke="#8a8487" stroke-width="1.1"/></svg>
<div class="a s" style="left:1423px;top:428px;font-size:11.5px;font-weight:bold;line-height:14px;color:#6a6467">Graphic Views</div>
<div class="a s" style="left:1284px;top:453px;width:200px;text-align:right;font-size:11.4px;line-height:14px;color:#3f3a3d">Type:</div>
<div class="a s" style="left:1494px;top:452px;width:169px;height:16px;background:#d3cdd0;border-radius:4px;font-size:11.4px;line-height:16px;padding-left:6px;color:#3a3537">Entropy</div>
<div class="a" style="left:1649px;top:454px;width:12px;height:12px;border-radius:3px;background:#3350f2"></div>
<svg class="a" style="left:1649px;top:454px" width="12" height="12" viewBox="0 0 12 12" ><path d="M3.5 5 L6 2.8 L8.5 5 M3.5 7 L6 9.2 L8.5 7" fill="none" stroke="#fff" stroke-width="1.1"/></svg>
<div class="a s" style="left:1284px;top:479px;width:200px;text-align:right;font-size:11.4px;line-height:14px;color:#3f3a3d">From:</div>
<div class="a s" style="left:1494px;top:478px;width:94px;height:16px;background:#dcd6d9;border:0.5px solid #d2cbcf;overflow:hidden;font-size:11.4px;line-height:14px;padding-left:2px;color:#1f1c1e">0</div>
<div class="a s" style="left:1594px;top:477px;width:69px;height:16px;background:#d2ccd0;border-radius:4px;text-align:center;font-size:11.4px;line-height:16px;color:#3a3537">Cur. Pos.</div>
<div class="a s" style="left:1284px;top:504px;width:200px;text-align:right;font-size:11.4px;line-height:14px;color:#3f3a3d">To:</div>
<div class="a s" style="left:1494px;top:503px;width:94px;height:16px;background:#dcd6d9;border:0.5px solid #d2cbcf;overflow:hidden;font-size:11.4px;line-height:14px;padding-left:2px;color:#1f1c1e">631472</div>
<div class="a s" style="left:1594px;top:501px;width:69px;height:16px;background:#d2ccd0;border-radius:4px;text-align:center;font-size:11.4px;line-height:16px;color:#3a3537">Cur. Pos.</div>
<div class="a s" style="left:1494px;top:523px;width:54px;height:16px;background:#d2ccd0;border-radius:4px;text-align:center;font-size:11.4px;line-height:16px;color:#3a3537">Section</div>
<div class="a s" style="left:1558px;top:523px;width:62px;height:16px;background:#d2ccd0;border-radius:4px;text-align:center;font-size:11.4px;line-height:16px;color:#3a3537">Segment</div>
<div class="a s" style="left:1630px;top:523px;width:33px;height:16px;background:#d2ccd0;border-radius:4px;text-align:center;font-size:11.4px;line-height:16px;color:#3a3537">File</div>
<svg class="a" style="left:1425px;top:549px" width="251" height="246" viewBox="0 0 251 246" ><defs><filter id="nz" x="0" y="0" width="100%" height="100%"><feTurbulence type="fractalNoise" baseFrequency="0.9" numOctaves="1" seed="3" result="t"/><feColorMatrix in="t" type="matrix" values="0 0 0 0 0.42  0 0 0 0 0.62  0 0 0 0 0.35  0 0 0 2.2 -1.05"/></filter></defs><defs><linearGradient id="eg" x1="0" y1="0" x2="1" y2="0.4"><stop offset="0" stop-color="#cc7649"/><stop offset="0.45" stop-color="#ca784a"/><stop offset="1" stop-color="#c3814f"/></linearGradient></defs><rect x="0" y="0" width="251" height="246" fill="url(#eg)"/><rect x="126" y="0" width="125" height="14" fill="#c2844f"/><rect x="126" y="67" width="15" height="24" fill="#b79058"/><rect x="157" y="77" width="31" height="38" fill="#ad985c"/><path d="M140.5 61 H164.8 V92 H157 V77.6 H155 V92 H150 V80 H140.5Z" fill="#14f08e"/><rect x="164.8" y="61.3" width="23.5" height="16.3" fill="#6cd683"/><rect x="126" y="123.6" width="94" height="62" fill="#6dd283"/><rect x="203.5" y="145" width="47.8" height="71" fill="#76cd80"/><rect x="220" y="123.6" width="31.3" height="21.4" fill="#c07f50"/><rect x="238.7" y="138.2" width="12.6" height="8.4" fill="#00f08c"/><rect x="157.5" y="154" width="31.5" height="31.4" fill="#a99e5e"/><rect x="149" y="185.4" width="54.5" height="30.3" fill="#c8744a"/><rect x="173" y="185.4" width="16" height="18" fill="#7cc57c"/><rect x="126" y="185.4" width="23" height="7.3" fill="#6dd283"/><rect x="126" y="192.7" width="31" height="53.3" fill="#00f08c"/><rect x="0" y="184" width="8.5" height="16" fill="#00f08c"/><rect x="0" y="200" width="16.5" height="15.7" fill="#00f08c"/><rect x="0" y="215.7" width="31.5" height="15.7" fill="#00f08c"/><rect x="0" y="231.4" width="31.5" height="14.6" fill="#74c27e"/><rect x="0" y="0" width="251" height="246" filter="url(#nz)" opacity="0.55"/><rect x="0" y="13.3" width="251" height="1.1" fill="#fbf39a"/><rect x="52.1" y="0" width="1.1" height="246" fill="#fbf39a"/></svg>
<div class="a" style="left:1407px;top:799px;width:289px;height:1px;background:#d2ccd0"></div>
<svg class="a" style="left:1415px;top:805.5px" width="8" height="11" viewBox="0 0 8 11" ><path d="M1.5 1 L5.5 5 L1.5 9" fill="none" stroke="#8a8487" stroke-width="1.1"/></svg>
<div class="a s" style="left:1423px;top:803px;font-size:11.5px;font-weight:bold;line-height:14px;color:#6a6467">Format</div>
<div class="a" style="left:1407px;top:820px;width:289px;height:1px;background:#d2ccd0"></div>
<svg class="a" style="left:1413px;top:828.5px" width="10" height="8" viewBox="0 0 10 8" ><path d="M1 1.5 L5 5.5 L9 1.5" fill="none" stroke="#8a8487" stroke-width="1.1"/></svg>
<div class="a s" style="left:1423px;top:824px;font-size:11.5px;font-weight:bold;line-height:14px;color:#6a6467">Comment</div>
<div class="a" style="left:1430px;top:851px;width:245px;height:57px;background:#dcd6d9;border:0.5px solid #cdc6ca"></div>
<div class="a" style="left:1407px;top:915px;width:289px;height:1px;background:#d2ccd0"></div>
<svg class="a" style="left:1413px;top:923.5px" width="10" height="8" viewBox="0 0 10 8" ><path d="M1 1.5 L5 5.5 L9 1.5" fill="none" stroke="#8a8487" stroke-width="1.1"/></svg>
<div class="a s" style="left:1423px;top:919px;font-size:11.5px;font-weight:bold;line-height:14px;color:#6a6467">Colors and Tags</div>
<div class="a s" style="left:1459px;top:947px;font-size:11.4px;line-height:14px;color:#3f3a3d">Area:</div>
<div class="a" style="left:1494px;top:943px;width:44px;height:20px;background:#f5f2f3;border:0.5px solid #bcb7ba"></div>
<div class="a" style="left:1499px;top:949px;width:34px;height:12px;background:#5a00f0"></div>
<div class="a s" style="left:1547px;top:946px;width:61px;height:20px;background:#d2ccd0;border-radius:4px;text-align:center;font-size:11.4px;line-height:20px;color:#3a3537">Set</div>
<div class="a s" style="left:1618px;top:946px;width:61px;height:20px;background:#d2ccd0;border-radius:4px;text-align:center;font-size:11.4px;line-height:20px;color:#3a3537">Clear</div>
<div class="a" style="left:56px;top:957px;width:1640px;height:21px;background:linear-gradient(#ededed,#d9d9d9)"></div>
<div class="a" style="left:56px;top:956px;width:1640px;height:1px;background:#bdb7ba"></div>
<div class="a s" style="left:64px;top:960px;font-size:11.85px;line-height:15px;color:#262626">Address 0x1000357f8, Segment __TEXT, _ramrod_display_set_progress + 8, Section __text, file offset 0x357f8 - Alt+Double Click to follow link in a new pane</div>
</div></body></html>
